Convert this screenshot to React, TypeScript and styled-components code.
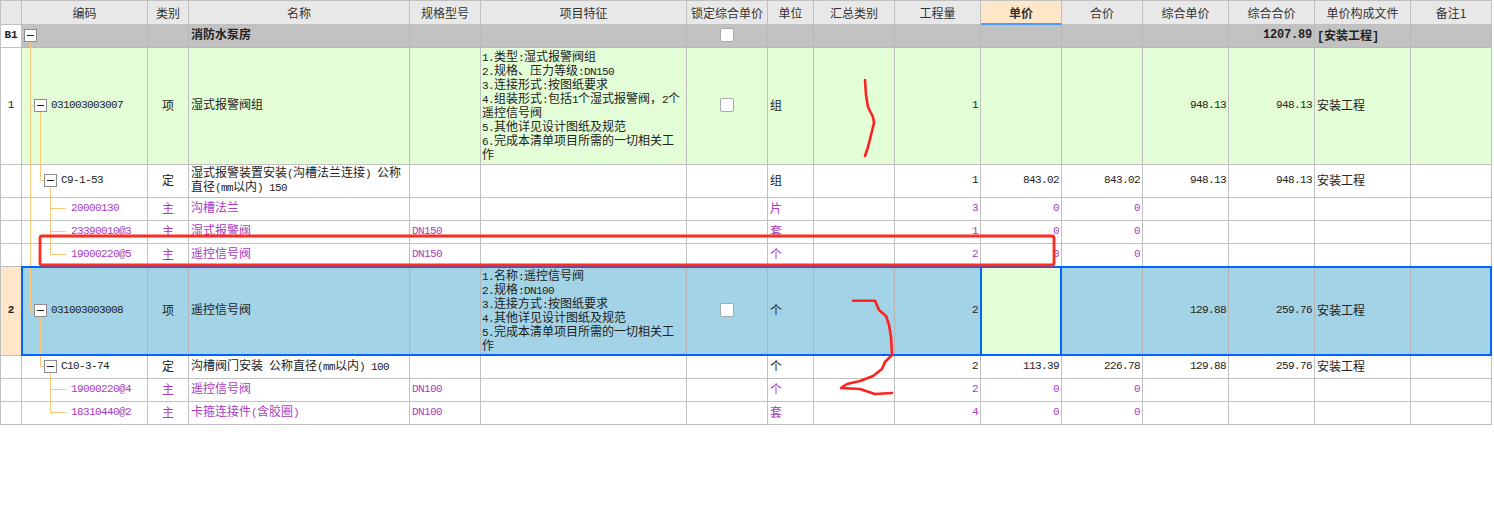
import React from 'react';
import styled, { createGlobalStyle, css } from 'styled-components';

const GlobalStyle = createGlobalStyle`
  html, body { margin: 0; padding: 0; background: #fff; }
  body { font-family: "Noto Sans CJK SC", "Liberation Sans", sans-serif; font-size: 12px; color: #222; }
`;

type Tone = 'group' | 'item' | 'plain' | 'material' | 'selected';
type Align = 'left' | 'center' | 'right';

const COLUMNS = '21px 126px 41px 221px 71px 206px 81px 46px 81px 86px 81px 81px 86px 86px 96px 81px';

const HEADERS = ['', '编码', '类别', '名称', '规格型号', '项目特征', '锁定综合单价', '单位', '汇总类别', '工程量', '单价', '合价', '综合单价', '综合合价', '单价构成文件', '备注1'];

const toneStyles = {
  group: css`background: #c2c2c2; color: #222; font-weight: 700; border-color: #b8b8b8;`,
  item: css`background: #e3fdd6; color: #222; border-color: #c0c0c0;`,
  plain: css`background: #fff; color: #222; border-color: #c0c0c0;`,
  material: css`background: #fff; color: #a93bbd; border-color: #c0c0c0;`,
  selected: css`background: #a3d3e6; color: #222; border-color: #b4b4b4;`,
};

const Page = styled.div`
  position: relative;
  width: 1494px;
  height: 506px;
  overflow: hidden;
`;

const Table = styled.div`
  width: 1491px;
  border-top: 1px solid #c0c0c0;
  border-left: 1px solid #c0c0c0;
`;

const Row = styled.div<{ $height: number }>`
  position: relative;
  display: grid;
  grid-template-columns: ${COLUMNS};
  grid-template-rows: ${(p) => p.$height}px;
  height: ${(p) => p.$height}px;
`;

const HeadCell = styled.div<{ $active?: boolean }>`
  display: flex;
  align-items: center;
  justify-content: center;
  box-sizing: border-box;
  background: ${(p) => (p.$active ? '#ffe6c8' : '#e8e8e8')};
  color: #333;
  font-weight: ${(p) => (p.$active ? 700 : 400)};
  border-right: 1px solid #c0c0c0;
  border-bottom: ${(p) => (p.$active ? '2px solid #4a9bff' : '1px solid #c0c0c0')};
  white-space: nowrap;
`;

const Cell = styled.div<{ $tone: Tone; $align?: Align; $active?: boolean }>`
  display: flex;
  align-items: center;
  justify-content: ${(p) => (p.$align === 'right' ? 'flex-end' : p.$align === 'center' ? 'center' : 'flex-start')};
  box-sizing: border-box;
  min-width: 0;
  padding: 0 2px 2px;
  border-right: 1px solid;
  border-bottom: 1px solid;
  white-space: nowrap;
  ${(p) => toneStyles[p.$tone]}
  ${(p) =>
    p.$active &&
    css`
      background: #e3fdd6;
      border-right: 2px solid #0066ff;
      box-shadow: inset 1px 0 0 #0066ff, -1px 0 0 #0066ff;
    `}
`;

// Noto sits low in its line box, this lifts the chinese cells back onto the row centre
const TextCell = styled(Cell)`
  padding-bottom: 4px;
`;

const FeatureCell = styled(Cell)`
  padding: 0 0 2px 1px;
`;

const NumberCell = styled.div<{ $tone: Tone; $active?: boolean }>`
  display: flex;
  align-items: center;
  justify-content: center;
  box-sizing: border-box;
  padding-bottom: 2px;
  background: ${(p) => (p.$active ? '#ffe6c8' : '#fff')};
  font-family: "Liberation Mono", monospace;
  font-size: ${(p) => (p.$tone === 'group' || p.$active ? 11 : 11)}px;
  font-weight: ${(p) => (p.$tone === 'group' || p.$active ? 700 : 400)};
  color: #222;
  border-right: 1px solid #c0c0c0;
  border-bottom: 1px solid #c0c0c0;
`;

const CodeCell = styled(Cell)<{ $indent: number }>`
  padding-left: ${(p) => p.$indent}px;
  gap: 4px;
`;

const NameText = styled.div`
  white-space: normal;
  line-height: 14px;
`;

const FeatureText = styled.div`
  white-space: normal;
  line-height: 13.9px;
  word-break: break-all;
`;

const Latin = styled.span`
  font-family: "Liberation Mono", monospace;
  font-size: 11px;
  letter-spacing: -0.6px;
  line-height: 0;
`;

const BoldLatin = styled(Latin)`
  font-size: 12px;
  font-weight: 700;
  letter-spacing: -0.2px;
`;

const Toggle = styled.span`
  position: relative;
  z-index: 2;
  display: inline-flex;
  align-items: center;
  justify-content: center;
  flex: none;
  width: 13px;
  height: 13px;
  box-sizing: border-box;
  background: #fff;
  border: 1px solid #8c8c8c;
  &::before {
    content: '';
    width: 7px;
    height: 1px;
    background: #222;
  }
`;

const Check = styled.span`
  display: block;
  width: 14px;
  height: 14px;
  box-sizing: border-box;
  background: #fff;
  border: 1px solid #a8a8a8;
  border-radius: 2px;
`;

const Selection = styled.div`
  position: absolute;
  z-index: 2;
  top: -1px;
  left: 20px;
  right: 0;
  bottom: 0;
  border: 2px solid #0066ff;
  pointer-events: none;
`;

const Overlay = styled.svg<{ $layer: number }>`
  position: absolute;
  top: 0;
  left: 0;
  z-index: ${(p) => p.$layer};
  pointer-events: none;
`;

// ascii runs go to the mono face, squeezed to the 6px advance of the original bitmap font
const Mixed = ({ text, bold }: { text: string; bold?: boolean }) => {
  const Run = bold ? BoldLatin : Latin;
  return (
    <>
      {text.split(/([\x20-\x7e]+)/).map((part, i) =>
        /^[\x20-\x7e]+$/.test(part) ? <Run key={i}>{part}</Run> : part
      )}
    </>
  );
};

interface RowData {
  no: string;
  tone: Tone;
  height: number;
  indent: number;
  toggle?: boolean;
  code?: string;
  kind?: string;
  name?: string;
  spec?: string;
  feature?: string[];
  lock?: boolean;
  unit?: string;
  qty?: string;
  price?: string;
  sum?: string;
  unitTotal?: string;
  total?: string;
  file?: string;
}

const ROWS: RowData[] = [
  { no: 'B1', tone: 'group', height: 23, indent: 2, toggle: true, name: '消防水泵房', lock: true, total: '1207.89', file: '[安装工程]' },
  {
    no: '1', tone: 'item', height: 117, indent: 12, toggle: true, code: '031003003007', kind: '项', name: '湿式报警阀组',
    feature: ['1.类型:湿式报警阀组', '2.规格、压力等级:DN150', '3.连接形式:按图纸要求', '4.组装形式:包括1个湿式报警阀\uFF0C2个遥控信号阀', '5.其他详见设计图纸及规范', '6.完成本清单项目所需的一切相关工作'],
    lock: true, unit: '组', qty: '1', unitTotal: '948.13', total: '948.13', file: '安装工程',
  },
  { no: '', tone: 'plain', height: 33, indent: 22, toggle: true, code: 'C9-1-53', kind: '定', name: '湿式报警装置安装(沟槽法兰连接) 公称直径(mm以内) 150', unit: '组', qty: '1', price: '843.02', sum: '843.02', unitTotal: '948.13', total: '948.13', file: '安装工程' },
  { no: '', tone: 'material', height: 23, indent: 49, code: '20000130', kind: '主', name: '沟槽法兰', unit: '片', qty: '3', price: '0', sum: '0' },
  { no: '', tone: 'material', height: 23, indent: 49, code: '23390010@3', kind: '主', name: '湿式报警阀', spec: 'DN150', unit: '套', qty: '1', price: '0', sum: '0' },
  { no: '', tone: 'material', height: 23, indent: 49, code: '19000220@5', kind: '主', name: '遥控信号阀', spec: 'DN150', unit: '个', qty: '2', price: '0', sum: '0' },
  {
    no: '2', tone: 'selected', height: 89, indent: 12, toggle: true, code: '031003003008', kind: '项', name: '遥控信号阀',
    feature: ['1.名称:遥控信号阀', '2.规格:DN100', '3.连接方式:按图纸要求', '4.其他详见设计图纸及规范', '5.完成本清单项目所需的一切相关工作'],
    lock: true, unit: '个', qty: '2', unitTotal: '129.88', total: '259.76', file: '安装工程',
  },
  { no: '', tone: 'plain', height: 23, indent: 22, toggle: true, code: 'C10-3-74', kind: '定', name: '沟槽阀门安装 公称直径(mm以内) 100', unit: '个', qty: '2', price: '113.39', sum: '226.78', unitTotal: '129.88', total: '259.76', file: '安装工程' },
  { no: '', tone: 'material', height: 23, indent: 49, code: '19000220@4', kind: '主', name: '遥控信号阀', spec: 'DN100', unit: '个', qty: '2', price: '0', sum: '0' },
  { no: '', tone: 'material', height: 23, indent: 49, code: '18310440@2', kind: '主', name: '卡箍连接件(含胶圈)', spec: 'DN100', unit: '套', qty: '4', price: '0', sum: '0' },
];

const TREE_LINES = 'M30.5 42V310.5H34 M30.5 105.5H34 M40.5 111V180.5H44 M50.5 187V254.5H66 M50.5 208.5H66 M50.5 231.5H66 M40.5 317V366.5H44 M50.5 373V412.5H66 M50.5 389.5H66';

const GridRow = ({ row }: { row: RowData }) => {
  const t = row.tone;
  const selected = t === 'selected';
  const Amount = t === 'group' ? BoldLatin : Latin;
  return (
    <Row $height={row.height}>
      <NumberCell $tone={t} $active={selected}>{row.no}</NumberCell>
      <CodeCell $tone={t} $indent={row.indent}>
        {row.toggle && <Toggle />}
        {row.code && <Latin>{row.code}</Latin>}
      </CodeCell>
      <TextCell $tone={t} $align="center">{row.kind}</TextCell>
      <TextCell $tone={t}>{row.name && <NameText><Mixed text={row.name} /></NameText>}</TextCell>
      <Cell $tone={t}>{row.spec && <Latin>{row.spec}</Latin>}</Cell>
      <FeatureCell $tone={t}>
        {row.feature && (
          <FeatureText>
            {row.feature.map((line) => (
              <div key={line}><Mixed text={line} /></div>
            ))}
          </FeatureText>
        )}
      </FeatureCell>
      <Cell $tone={t} $align="center">{row.lock && <Check />}</Cell>
      <TextCell $tone={t}>{row.unit}</TextCell>
      <Cell $tone={t} />
      <Cell $tone={t} $align="right">{row.qty && <Latin>{row.qty}</Latin>}</Cell>
      <Cell $tone={t} $align="right" $active={selected}>{row.price && <Latin>{row.price}</Latin>}</Cell>
      <Cell $tone={t} $align="right" style={selected ? { borderRightColor: '#b4b4b4' } : undefined}>{row.sum && <Latin>{row.sum}</Latin>}</Cell>
      <Cell $tone={t} $align="right">{row.unitTotal && <Latin>{row.unitTotal}</Latin>}</Cell>
      <Cell $tone={t} $align="right">{row.total && <Amount>{row.total}</Amount>}</Cell>
      <TextCell $tone={t}>{row.file && <span><Mixed text={row.file} bold={t === 'group'} /></span>}</TextCell>
      <Cell $tone={t} />
      {selected && <Selection />}
    </Row>
  );
};

const App = () => (
  <Page>
    <GlobalStyle />
    <Table>
      <Row $height={24}>
        {HEADERS.map((h, i) => (
          <HeadCell key={i} $active={h === '单价'}>{h}</HeadCell>
        ))}
      </Row>
      {ROWS.map((row, i) => (
        <GridRow key={i} row={row} />
      ))}
    </Table>

    <Overlay $layer={1} width="1494" height="506">
      <path d={TREE_LINES} fill="none" stroke="#ffc878" strokeWidth="1" />
    </Overlay>

    {/* hand drawn red marks */}
    <Overlay $layer={3} width="1494" height="506">
      <rect x="40" y="236" width="1014" height="29" rx="2" fill="none" stroke="#ff2a20" strokeWidth="2.8" />
      <path
        d="M865 80L866 95L868 107L873 117L874 123L871 135L868 147L865 156"
        fill="none" stroke="#ff2020" strokeWidth="2.6" strokeLinejoin="round" strokeLinecap="round"
      />
      <path
        d="M853 300.7H875L879 310L886 316L889 325L891 337L892 355L885 362L882 369L873 376L860 381L847 384L841 388L860 389L875 394L892 393"
        fill="none" stroke="#ff2020" strokeWidth="2.6" strokeLinejoin="round" strokeLinecap="round"
      />
    </Overlay>
  </Page>
);

export default App;
